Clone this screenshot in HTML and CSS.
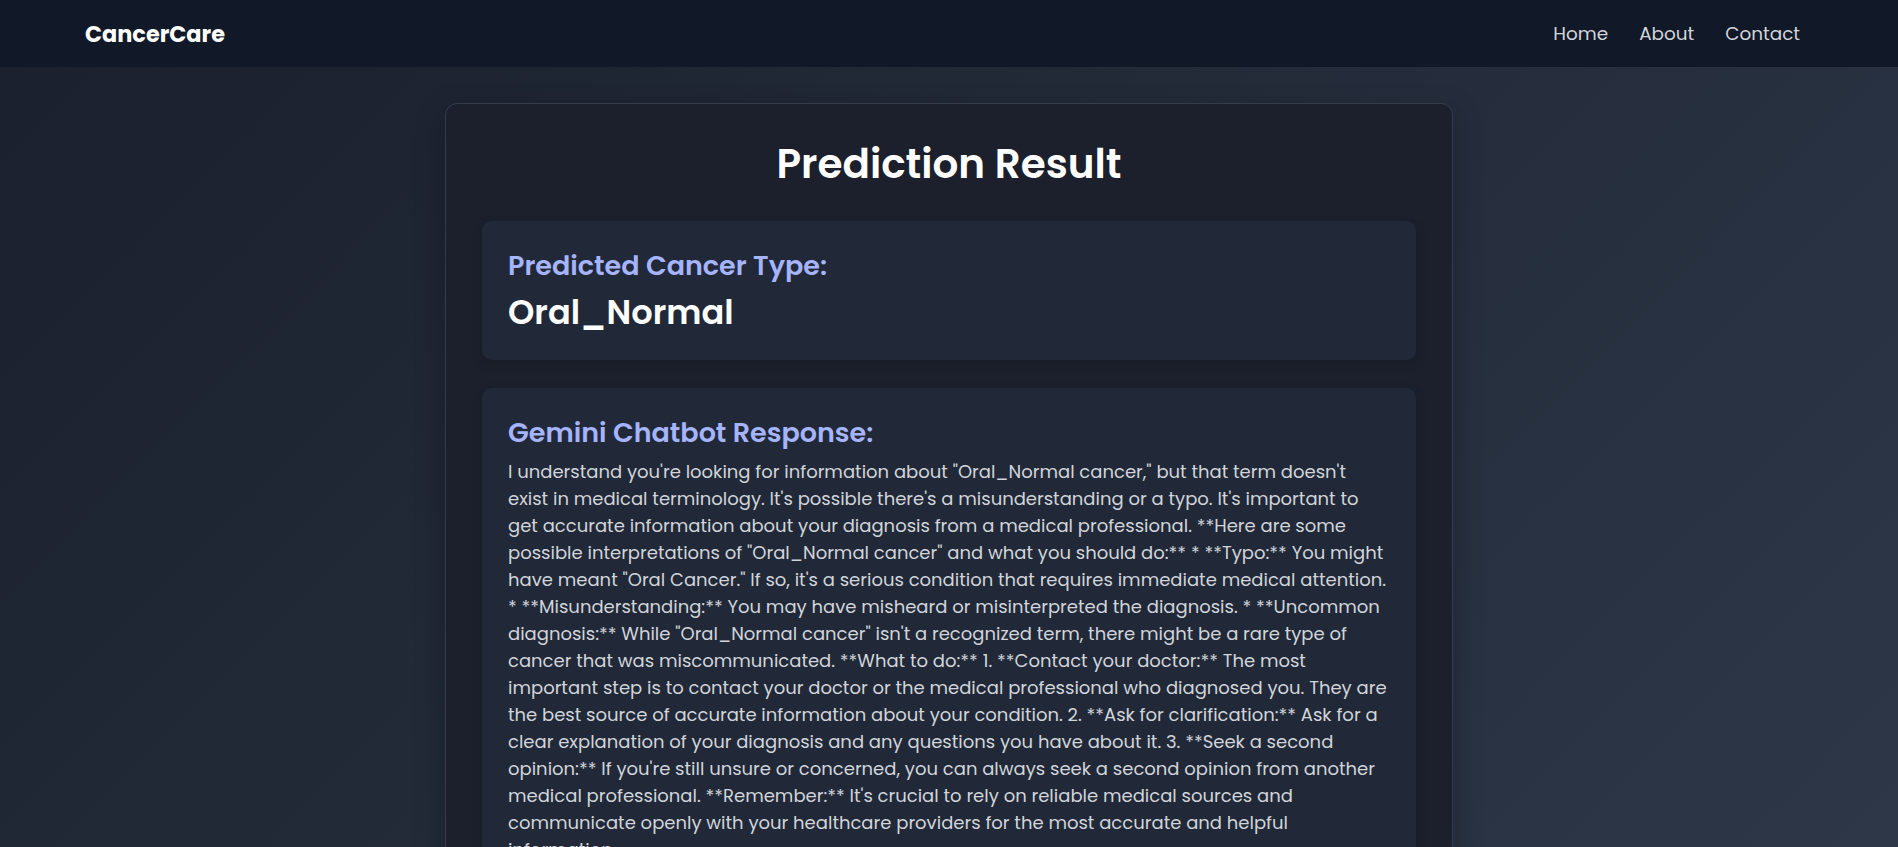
FILE: index.html
```html
<!DOCTYPE html>
<html lang="en">
<head>
<meta charset="utf-8">
<title>CancerCare - Prediction Result</title>
<link rel="stylesheet" href="styles.css">
</head>
<body>
<nav class="navbar">
  <a class="brand" href="#">CancerCare</a>
  <ul class="nav-links">
    <li><a href="#">Home</a></li>
    <li><a href="#">About</a></li>
    <li><a href="#">Contact</a></li>
  </ul>
</nav>
<main class="main">
  <section class="card">
    <h1 class="title">Prediction Result</h1>
    <div class="panel">
      <h3 class="panel-label">Predicted Cancer Type:</h3>
      <p class="prediction">Oral_Normal</p>
    </div>
    <div class="panel">
      <h3 class="panel-label">Gemini Chatbot Response:</h3>
      <p class="response">I understand you're looking for information about "Oral_Normal cancer," but that term doesn't exist in medical terminology. It's possible there's a misunderstanding or a typo. It's important to get accurate information about your diagnosis from a medical professional. **Here are some possible interpretations of "Oral_Normal cancer" and what you should do:** * **Typo:** You might have meant "Oral Cancer." If so, it's a serious condition that requires immediate medical attention. * **Misunderstanding:** You may have misheard or misinterpreted the diagnosis. * **Uncommon diagnosis:** While "Oral_Normal cancer" isn't a recognized term, there might be a rare type of cancer that was miscommunicated. **What to do:** 1. **Contact your doctor:** The most important step is to contact your doctor or the medical professional who diagnosed you. They are the best source of accurate information about your condition. 2. **Ask for clarification:** Ask for a clear explanation of your diagnosis and any questions you have about it. 3. **Seek a second opinion:** If you're still unsure or concerned, you can always seek a second opinion from another medical professional. **Remember:** It's crucial to rely on reliable medical sources and communicate openly with your healthcare providers for the most accurate and helpful information.</p>
    </div>
  </section>
</main>
</body>
</html>
```

FILE: styles.css
```css
* {
  box-sizing: border-box;
}

html, body {
  margin: 0;
  padding: 0;
}

body {
  font-family: "Poppins", "Open Sans", "DejaVu Sans", sans-serif;
  color: #ffffff;
  background: linear-gradient(135deg, #1a202c 0%, #2d3748 100%);
  background-attachment: fixed;
  min-height: 100vh;
}

.navbar {
  height: 67px;
  background: #111827;
  display: flex;
  align-items: center;
  justify-content: space-between;
  padding: 0 98px 0 85px;
}

.brand {
  color: #ffffff;
  text-decoration: none;
  font-size: 22.4px;
  font-weight: 700;
}

.nav-links {
  list-style: none;
  display: flex;
  gap: 31px;
  margin: 0;
  padding: 0;
}

.nav-links a {
  color: #d1d5db;
  text-decoration: none;
  font-size: 18.4px;
}

.main {
  display: flex;
  justify-content: center;
  padding: 36px 0 40px;
}

.card {
  width: 1008px;
  background: #1c202c;
  border: 1px solid #353c4a;
  border-radius: 12px;
  padding: 36px;
  box-shadow: 0 10px 30px rgba(0, 0, 0, 0.25);
}

.title {
  margin: 0 0 33px;
  text-align: center;
  font-size: 40.5px;
  line-height: 48px;
  font-weight: 600;
}

.panel {
  background: #212938;
  border-radius: 10px;
  padding: 27px 26px 24px;
  margin-bottom: 28px;
  box-shadow: 0 4px 12px rgba(0, 0, 0, 0.12);
}

.panel-label {
  margin: 0 0 6px;
  color: #a5b4fc;
  font-size: 27px;
  line-height: 35px;
  font-weight: 600;
}

.prediction {
  margin: 0;
  font-size: 33.6px;
  line-height: 47px;
  font-weight: 600;
}

.response {
  margin: 8px 0 0;
  color: #d1d5db;
  font-size: 18px;
  line-height: 27px;
}
```
